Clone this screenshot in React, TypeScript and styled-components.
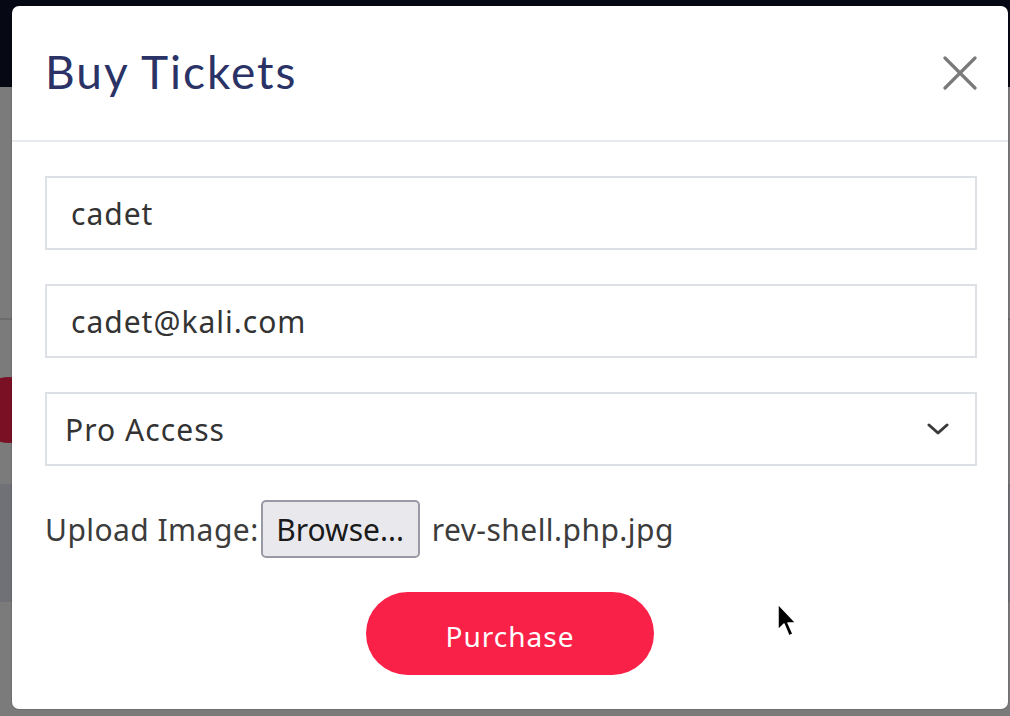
import React from "react";
import styled, { createGlobalStyle } from "styled-components";

const Global = createGlobalStyle`
  html, body { margin: 0; padding: 0; }
  body { width: 1010px; height: 716px; overflow: hidden; background: #7b7b7b; font-family: "Noto Sans", "Open Sans", sans-serif; }
`;

const Page = styled.div`
  position: relative;
  width: 1010px;
  height: 716px;
  overflow: hidden;
  background: #7b7b7b;
  display: flex;
  flex-direction: column;
`;

const NavBar = styled.div`
  height: 87px;
  background: #060814;
  flex: none;
`;

const HeroBand = styled.div`
  height: 231px;
  border-bottom: 2px solid #6c6c6c;
  flex: none;
`;

const MidBand = styled.div`
  position: relative;
  height: 164px;
  flex: none;
`;

const RedDot = styled.div`
  position: absolute;
  left: -24px;
  top: 57px;
  width: 66px;
  height: 66px;
  border-radius: 50%;
  background: #7a1024;
`;

const DarkBand = styled.div`
  height: 118px;
  background: #707176;
  flex: none;
`;

const Modal = styled.div`
  position: absolute;
  left: 12px;
  top: 6px;
  width: 996px;
  height: 703px;
  background: #ffffff;
  border-radius: 7px;
  box-shadow: 0 0 2px rgba(0,0,0,0.35);
  display: flex;
  flex-direction: column;
`;

const Header = styled.div`
  height: 136px;
  border-bottom: 2px solid #e6e9ee;
  display: flex;
  align-items: center;
  justify-content: space-between;
  padding: 0 30px 0 33px;
  box-sizing: border-box;
  flex: none;
`;

const Title = styled.h1`
  margin: 0;
  margin-top: -4px;
  font-family: "Lato", sans-serif;
  font-weight: 400;
  font-size: 46px;
  letter-spacing: 2px;
  color: #2a3266;
`;

const CloseButton = styled.button`
  border: none;
  background: none;
  padding: 0;
  width: 36px;
  height: 36px;
  display: flex;
  align-items: center;
  justify-content: center;
`;

const Body = styled.div`
  padding: 34px 31px 0 33px;
  display: flex;
  flex-direction: column;
  gap: 34px;
`;

const Field = styled.div<{ $pl?: number; $ls?: number }>`
  height: 74px;
  border: 2px solid #dde1e6;
  box-sizing: border-box;
  display: flex;
  align-items: center;
  padding-left: ${(p) => p.$pl ?? 24}px;
  padding-right: 26px;
  font-size: 30px;
  letter-spacing: ${(p) => p.$ls ?? 1}px;
  color: #333333;
  justify-content: space-between;
`;

const UploadRow = styled.div`
  display: flex;
  align-items: center;
  font-size: 30px;
  letter-spacing: 0.45px;
  color: #3c3c3c;
  height: 58px;
`;

const BrowseButton = styled.span`
  display: inline-flex;
  align-items: center;
  justify-content: center;
  height: 58px;
  width: 159px;
  box-sizing: border-box;
  margin: 0 12px 0 2px;
  background: #e9e9ed;
  border: 2px solid #9a9aa6;
  border-radius: 5px;
  color: #1a1a1a;
  letter-spacing: 0px;
`;

const Footer = styled.div`
  display: flex;
  justify-content: center;
  padding-right: 2px;
`;

const PurchaseButton = styled.button`
  width: 288px;
  height: 83px;
  border: none;
  border-radius: 42px;
  background: #fa2149;
  color: #ffffff;
  font-family: "Noto Sans", sans-serif;
  font-size: 28px;
  letter-spacing: 1px;
  padding: 4px 0 0 0;
`;

const Cursor = styled.svg`
  position: absolute;
  left: 775px;
  top: 602px;
`;

export default function App() {
  return (
    <>
      <Global />
      <Page>
        <NavBar />
        <HeroBand />
        <MidBand>
          <RedDot />
        </MidBand>
        <DarkBand />
        <Modal>
          <Header>
            <Title>Buy Tickets</Title>
            <CloseButton aria-label="close">
              <svg width="34" height="34" viewBox="0 0 34 34">
                <path d="M2 2 L32 32 M32 2 L2 32" stroke="#7a7a7a" strokeWidth="3.2" strokeLinecap="round" />
              </svg>
            </CloseButton>
          </Header>
          <Body>
            <Field $pl={24}>cadet</Field>
            <Field $pl={24}>cadet@kali.com</Field>
            <Field $pl={18} $ls={1.05}>
              <span>Pro Access</span>
              <svg width="22" height="14" viewBox="0 0 22 14">
                <path d="M2 3 L11 11 L20 3" stroke="#3a3a3a" strokeWidth="3" fill="none" strokeLinecap="round" strokeLinejoin="round" />
              </svg>
            </Field>
            <UploadRow>
              Upload Image:<BrowseButton>Browse...</BrowseButton>rev-shell.php.jpg
            </UploadRow>
            <Footer>
              <PurchaseButton>Purchase</PurchaseButton>
            </Footer>
          </Body>
        </Modal>
        <Cursor width="24" height="38" viewBox="0 0 24 38">
          <path d="M3 2 L3 28 L9 22 L14 34 L18 32 L13 21 L21 21 Z" fill="#000" stroke="#fff" strokeWidth="1.5" strokeLinejoin="round" />
        </Cursor>
      </Page>
    </>
  );
}
